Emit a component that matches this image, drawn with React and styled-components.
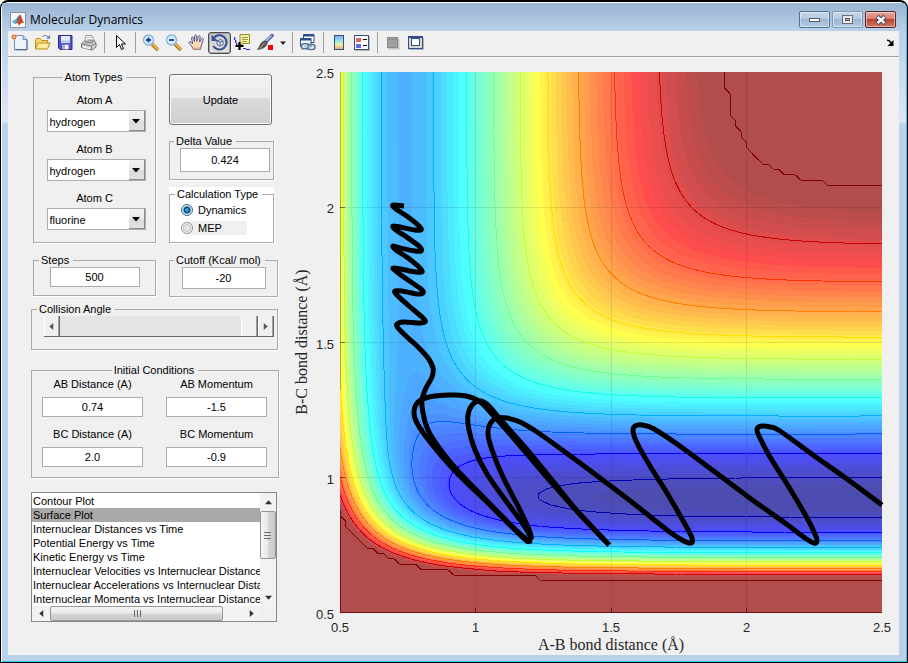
import React, { useState } from "react";
import styled, { createGlobalStyle, css } from "styled-components";

const GlobalStyle = createGlobalStyle`
  * { box-sizing: border-box; }
  body {
    margin: 0;
    background: #fff;
    color: #000;
    font: 11px/14px "Liberation Sans", Arial, sans-serif;
  }
  button, input, select { font: inherit; color: inherit; margin: 0; }
`;

/* ---------- window frame ---------- */

const Window = styled.main`
  min-height: 100vh;
  display: flex;
  flex-direction: column;
  padding: 0 8px 7px 7px;
  background: linear-gradient(#99b4d1 0, #b9d1ea 31px, #dce7f5 120px, #b9d1ea 122px);
  border: 1px solid #000;
  border-top-width: 2px;
  border-radius: 8px 8px 0 0;
  box-shadow: inset 1px 1px 0 #fff, inset -1px -1px 0 #35c4dc;
`;

const TitleBar = styled.header`
  display: flex;
  align-items: center;
  height: 28px;
  padding: 5px 4px 0 8px;
  background: linear-gradient(#99b4d1, #b9d1ea);
  margin: 1px -6px 0;
`;

const Title = styled.h1`
  flex: 1;
  margin: 0 0 0 4px;
  font: 12px/16px "Open Sans", "Noto Sans", sans-serif;
`;

const WindowButtons = styled.div`
  display: flex;
  gap: 2px;
  padding-right: 5px;
`;

const WindowButton = styled.button`
  display: grid;
  place-items: center;
  width: 31px;
  height: 17px;
  padding: 0;
  border: 1px solid ${(p) => (p.$close ? "#5a2630" : p.$soft ? "#8099b5" : "#56708f")};
  border-radius: 2px;
  background: ${(p) =>
    p.$close
      ? "linear-gradient(#e5a79d 0, #d98072 45%, #b8452f 50%, #cf7a63 100%)"
      : "linear-gradient(#c3d6ea 0, #b6cbe1 45%, #9ab6d2 50%, #b3cde6 100%)"};
  box-shadow: inset 0 0 0 1px rgba(255, 255, 255, 0.45);
`;

const Client = styled.div`
  flex: 1;
  display: flex;
  flex-direction: column;
  background: #f0f0f0;
`;

/* ---------- toolbar ---------- */

const Toolbar = styled.div`
  display: flex;
  align-items: center;
  height: 26px;
  padding-bottom: 2px;
  border-bottom: 1px solid #a0a0a0;
  box-shadow: 0 1px 0 #fff;
`;

const Tool = styled.button`
  display: grid;
  place-items: center;
  width: ${(p) => (p.$narrow ? 11 : 23)}px;
  height: 22px;
  padding: 0;
  border: 1px solid transparent;
  border-radius: 3px;
  background: none;
  ${(p) =>
    p.$pressed &&
    css`
      border-color: #4a4a4a;
      background: linear-gradient(#c8c8c8, #e4e4e4);
      box-shadow: inset 0 0 0 1px #aaa;
    `}
`;

const Divider = styled.span`
  width: 1px;
  height: 21px;
  margin: 0 3px 0 4px;
  background: #a0a0a0;
`;

const DockButton = styled(Tool)`
  margin-left: auto;
  width: 18px;
`;

/* ---------- control column ---------- */

const Pane = styled.div`
  flex: 1;
  display: flex;
  align-items: flex-start;
  padding-top: 1px;
`;

const Controls = styled.form`
  flex: 0 0 273px;
  display: flex;
  flex-direction: column;
  padding: 12px 0 33px 23px;
`;

const Row = styled.div`
  display: flex;
  align-items: flex-start;
  gap: 13px;
  padding-left: 2px;
  margin-bottom: ${(p) => p.$after || 0}px;
`;

const Stack = styled.div`
  display: flex;
  flex-direction: column;
`;

const WhitePanel = styled.div`
  background: #fff;
`;

const Group = styled.fieldset`
  display: block;
  min-width: 0;
  width: ${(p) => p.$w}px;
  height: ${(p) => p.$h}px;
  margin: 0 0 ${(p) => p.$after || 0}px;
  padding: ${(p) => p.$pad || "0 10px"};
  border: 1px solid #a9a9a9;
  box-shadow: 1px 1px 0 #fff;
`;

const Legend = styled.legend`
  padding: 0 4px 0 2px;
  white-space: nowrap;
  margin-left: ${(p) => (p.$center ? "auto" : `${p.$shift}px`)};
  margin-right: ${(p) => (p.$center ? "auto" : "0")};
`;

const AtomField = styled.label`
  display: flex;
  flex-direction: column;
  align-items: center;
  gap: 3px;
  margin-bottom: 10px;
`;

const Combo = styled.span`
  display: grid;
  width: 99px;
  height: 22px;
  margin-left: 3px;
  border: 1px solid #abadb3;
  background: #fff;
`;

const ComboSelect = styled.select`
  grid-area: 1 / 1;
  appearance: none;
  border: 0;
  border-radius: 0;
  padding: 2px 18px 0 2px;
  background: transparent;
`;

const ComboArrow = styled.span`
  grid-area: 1 / 1;
  justify-self: end;
  display: grid;
  place-items: center;
  width: 16px;
  border-right: 1px solid #8a8a8a;
  border-bottom: 1px solid #8a8a8a;
  background: linear-gradient(#f2f2f2, #ebebeb 50%, #dadada 51%, #e2e2e2);
  pointer-events: none;
`;

const UpdateButton = styled.button`
  width: 103px;
  height: 51px;
  margin: 4px 0 9px;
  border: 1px solid #707070;
  border-radius: 3px;
  background: linear-gradient(#f2f2f2 0, #ebebeb 46%, #dadada 48%, #cfcfcf 100%);
  box-shadow: inset 0 0 0 1px #fafafa;
`;

const TextBox = styled.input`
  display: block;
  width: ${(p) => p.$w}px;
  height: ${(p) => p.$h || 20}px;
  margin: 0 auto;
  padding: 0;
  border: 1px solid #abadb3;
  border-radius: 0;
  background: #fff;
  text-align: center;
`;

const RadioRow = styled.label`
  display: flex;
  align-items: center;
  gap: 5px;
  width: 66px;
  height: 14px;
  margin-bottom: 4px;
  background: ${(p) => (p.$shaded ? "linear-gradient(90deg, #fff 8px, #f0f0f0 8px)" : "none")};
`;

const Radio = styled.input`
  appearance: none;
  flex: none;
  width: 12px;
  height: 12px;
  border: 1px solid #8a8f94;
  border-radius: 50%;
  background: radial-gradient(circle, #e9e9e9 30%, #c4c8cc 50%, #f7f7f7 62%);
  &:checked {
    border-color: #3c6d8c;
    background: radial-gradient(circle, #5fd0f5 0, #1573ad 2px, #0f3f6b 3px, #bfe2f2 4px, #e8f6fc 6px);
  }
`;

const SliderRow = styled.div`
  display: flex;
  width: 230px;
  height: 21px;
  border-bottom: 1px solid #696969;
`;

const SliderButton = styled.button`
  display: grid;
  place-items: center;
  width: 16px;
  padding: 0;
  border: solid #696969;
  border-width: 0 1px 0 0;
  background: #f0f0f0;
  box-shadow: inset -1px 0 0 #a0a0a0, inset 1px 0 0 #fff;
`;

const Slider = styled.input`
  appearance: none;
  flex: 1;
  min-width: 0;
  height: 20px;
  background: #e5e5e5;
  &::-webkit-slider-thumb {
    appearance: none;
    width: 17px;
    height: 20px;
    background: #f0f0f0;
    border-right: 1px solid #696969;
    box-shadow: inset -1px 0 0 #a0a0a0, inset 1px 0 0 #fff;
  }
`;

const ConditionGrid = styled.div`
  display: grid;
  grid-template-columns: 101px 101px;
  column-gap: 23px;
  row-gap: 10px;
`;

const Condition = styled.label`
  display: flex;
  flex-direction: column;
  gap: 6px;
  text-align: center;
`;

/* ---------- plot list ---------- */

const ListFrame = styled.div`
  display: grid;
  grid-template: 113px 15px / 1fr 16px;
  width: 246px;
  height: 130px;
  border: 1px solid #828790;
  background: #f0f0f0;
`;

const PlotList = styled.select`
  width: 100%;
  height: 113px;
  padding: 1px 0 0;
  border: 0;
  border-radius: 0;
  background: #fff;
  overflow: hidden;
  scrollbar-width: none;
  outline: none;
`;

const PlotOption = styled.option`
  min-height: 0;
  height: 14px;
  padding: 1px 1px 0;
  line-height: 14px;
  &:checked {
    background: #a9a9a9 linear-gradient(#a9a9a9, #a9a9a9);
    color: #000;
  }
`;

const ScrollBar = styled.div`
  display: flex;
  flex-direction: ${(p) => (p.$vertical ? "column" : "row")};
  background: #f2f2f2;
`;

const ScrollButton = styled.button`
  display: grid;
  place-items: center;
  flex: 0 0 18px;
  padding: 0;
  border: 0;
  background: none;
`;

const ScrollThumb = styled.div`
  display: grid;
  place-items: center;
  flex: 0 0 ${(p) => p.$size}px;
  border: 1px solid #979797;
  border-radius: 2px;
  background: linear-gradient(
    ${(p) => (p.$vertical ? "90deg" : "180deg")},
    #f5f5f5,
    #e9e9eb 48%,
    #d6d6d9 52%,
    #c9c9cc
  );
`;

const Spring = styled.span`
  flex: 1;
`;

const PlotArea = styled.svg`
  flex: 1;
  min-width: 0;
  height: auto;
`;

/* ---------- icons ---------- */

const Icon = ({ children, size = 17 }) => (
  <svg width={size} height={size} viewBox={`0 0 ${size} ${size}`} fill="none" aria-hidden="true">
    {children}
  </svg>
);

const AppIcon = () => (
  <Icon size={16}>
    <rect x=".5" y=".5" width="15" height="15" fill="#f6f7f9" stroke="#8a929c" />
    <path d="M2 9.5 6 7.5 8.5 4 10 2.5V12L7.5 10.5 5.5 12Z" fill="#3b77b4" />
    <path d="M2 9.5 6 7.5 7 8.7 5.5 12Z" fill="#5fb0d0" />
    <path d="M10 2.5C11.5 4 12.6 8.5 14.3 11.5 12.4 10 11 10.8 9 13.8 8.6 12 7.5 11 6.5 11 8.5 9 9 5 10 2.5Z" fill="#d9501e" />
    <path d="M10 2.5C10.6 6 10 10.5 9 13.8 11 10.8 10.9 6 10 2.5Z" fill="#8e2412" />
  </Icon>
);

const NewIcon = () => (
  <Icon>
    <path d="M3.5 1.500h8.500l4 4v10.500H3.500z" fill="#edf4fc" stroke="#7390b8" />
    <path d="M12 1.500v4h4" fill="#bcd4ec" stroke="#7390b8" />
    <path d="M4.500 15.500h11.500V6" stroke="#4f6d9c" />
    <circle cx="3" cy="3" r="2.500" fill="#fff" />
    <path d="M3 0v1.500M3 4.500V6M0 3h1.500M4.500 3H6M1 1l1 1M4 4l1 1M5 1 4 2M2 4 1 5" stroke="#e0693a" />
    <circle cx="3" cy="3" r="1.500" fill="#ffe3b8" stroke="#e0693a" />
  </Icon>
);

const OpenIcon = () => (
  <Icon>
    <path d="M1.5 14.5v-9l1-1h3.500l1.500 2h6v3" fill="#f5d76a" stroke="#b98e1c" />
    <path d="M1.5 15 4 9h12l-2.500 6z" fill="#ffe88c" stroke="#b98e1c" />
    <path d="M4.8 10.500h9M4 12.500h9" stroke="#fff6c4" />
    <path d="M8.5 3C10 1 12.500 1 14 3" stroke="#5a7a9c" />
    <path d="M12 4.500h4V1z" fill="#5a7a9c" />
  </Icon>
);

const SaveIcon = () => (
  <Icon>
    <path d="M1.5 1.5H15v14H3L1.5 14z" fill="#5252d0" stroke="#2b2b8a" />
    <rect x="4" y="2" width="9" height="7" fill="#dfe9fb" />
    <path d="M4 7.5h9" stroke="#b5c8ee" strokeWidth="2" />
    <rect x="5" y="10.5" width="7" height="5" fill="#a9a9c4" />
    <rect x="8" y="11" width="3" height="4" fill="#f4f4fa" />
  </Icon>
);

const PrintIcon = () => (
  <Icon>
    <path d="M4.500 8 6 1.500h6l2.500 5z" fill="#fdfdfd" stroke="#8f98a0" />
    <path d="M7 3.500h5M7 5.500h6" stroke="#b9c2c8" />
    <path d="M1.500 9.500 5 7h9.500l1.500 2v4l-4 3-10.500-2.500z" fill="#d2d2d2" stroke="#7a7a7a" />
    <path d="M2 10l9.500 2L16 9M11.500 12v4" stroke="#7a7a7a" />
    <path d="M3 13l7 1.500" stroke="#f4f4f4" strokeWidth="1.500" />
    <path d="M5 8.500h8" stroke="#9a9a9a" strokeWidth="2" />
  </Icon>
);

const PointerIcon = () => (
  <Icon>
    <path d="M5.5 1.5v12l3-3 2 5 2-1-2-4.500h4z" fill="#fff" stroke="#000" />
  </Icon>
);

const LensIcon = ({ plus }) => (
  <Icon>
    <path d="M10 10l6 6" stroke="#a86a1a" strokeWidth="3.5" />
    <path d="M10 9.500l6 6" stroke="#f5b64a" strokeWidth="1.800" />
    <circle cx="6.500" cy="6" r="5" fill="#d3eefc" stroke="#86b4de" strokeWidth="1.400" />
    <path d={plus ? "M4 6h5M6.500 3.500v5" : "M4 6h5"} stroke="#1d3a96" strokeWidth="1.800" />
  </Icon>
);

const HandIcon = () => (
  <Icon>
    <path
      d="M5.5 15.500C4.500 12.500 1 9.500 .8 8.300 1.300 7 3.300 8 4.700 9.800L3.500 4C3.800 2.600 5.200 2.800 5.500 4l1 3.500L6.600 2C7 .7 8.300 .7 8.600 2l.3 5.300L10.300 2.200c.7-1.200 1.900-.7 1.900 .5L11.500 8l2.300-3.500c1-.8 1.900 0 1.500 1.100L13.500 11l-1 4.500z"
      fill="#fbd9b5"
      stroke="#4b5a96"
    />
    <path d="M5.5 14.500h7" stroke="#e8ae7a" strokeWidth="2" />
  </Icon>
);

const RotateIcon = () => (
  <Icon size={19}>
    <path d="M4 4.500A7.200 7.200 0 1 1 3.200 13" stroke="#3c5590" strokeWidth="2.200" />
    <path d="M1.500 1.500V8H8z" fill="#3c5590" />
    <path d="M7 8l3.500-1.500L13 8v3.500L9.800 13 7 11.500zM7 8l3 1.200L13 8M10 9.200V13" fill="#e8f0fa" stroke="#4a6498" />
  </Icon>
);

const CursorIcon = () => (
  <Icon>
    <path d="M.7 3v3M1.700 6v3M2.700 9v2M9 14.500h3M12 15.500h4" stroke="#2020d8" strokeWidth="1.200" />
    <path d="M6 .5h9.500v9H9l-3 2z" fill="#f6f2a4" stroke="#8f8a2e" />
    <path d="M8 3.500h6M8 5.500h6M8 7.500h5" stroke="#a39d4a" />
    <path d="M1.500 12h8M5.500 8v8" stroke="#000" strokeWidth="2.200" />
  </Icon>
);

const BrushIcon = () => (
  <Icon>
    <path d="M15 1.500 8 8.500" stroke="#4a5fa8" strokeWidth="3.400" strokeLinecap="round" />
    <path d="M14.500 1.500 8 8" stroke="#c4d4f2" strokeWidth="1.200" />
    <path d="M8.500 7c1.500 .5 2 1.500 1.500 3-1.500 3.500-5 5-9.500 5.500C3 13 3 9 6 7.500z" fill="#5a5a52" stroke="#333" strokeWidth=".6" />
    <path d="M3 14.500c2-2 2.500-4 4.500-5.500" stroke="#a5a596" />
    <rect x="11" y="11" width="5" height="5" fill="#f00" />
  </Icon>
);

const LinkIcon = () => (
  <Icon>
    <path d="M4.500 .5H15v8H4.500z" fill="#fff" stroke="#2f4f86" />
    <path d="M4.500 1.500H15" stroke="#2f4f86" strokeWidth="2" />
    <path d="M1.500 4.500H12v8H1.500z" fill="#f0f5fb" stroke="#2f4f86" />
    <path d="M1.500 5.500H12" stroke="#2f4f86" strokeWidth="2" />
    <rect x="2.500" y="9.800" width="7.500" height="5" rx="2.400" fill="#e8f0f8" stroke="#56789c" strokeWidth="1.600" />
    <rect x="8.500" y="10.500" width="7.500" height="5" rx="2.400" stroke="#56789c" strokeWidth="1.600" />
    <path d="M5 12.600h8.500" stroke="#9db9d2" strokeWidth="1.400" />
  </Icon>
);

const ColorbarIcon = () => (
  <Icon>
    <defs>
      <linearGradient id="bar" x2="0" y2="1">
        <stop offset="0" stopColor="#8c9ef5" />
        <stop offset=".35" stopColor="#8fe3ee" />
        <stop offset=".65" stopColor="#f3ee9a" />
        <stop offset="1" stopColor="#f0a08c" />
      </linearGradient>
    </defs>
    <rect x="4.500" y="1.500" width="9" height="14" fill="url(#bar)" stroke="#2f4f86" />
  </Icon>
);

const LegendIcon = () => (
  <Icon>
    <path d="M2 16.500h14.500V3" stroke="#b9b9b0" />
    <rect x="1.500" y="1.500" width="14" height="14" fill="#fff" stroke="#2f4f86" />
    <rect x="3" y="4" width="5" height="4" fill="#e46464" />
    <rect x="3" y="10" width="5" height="4" fill="#6464e4" />
    <path d="M10 5.500h4M10 11.500h4" stroke="#000" />
  </Icon>
);

const HideIcon = () => (
  <Icon>
    <path d="M4 14.500h10.500V5" stroke="#c4c4c4" strokeWidth="2" />
    <rect x="3.500" y="3.500" width="10" height="10" fill="#a0a0a0" stroke="#8a8a8a" />
    <path d="M4 5.500h9" stroke="#8c8c8c" />
  </Icon>
);

const ShowIcon = () => (
  <Icon>
    <path d="M2 15.500h14.500V4" stroke="#b4b4b4" />
    <rect x="1.500" y="2.500" width="14" height="12" fill="#d6d9cc" stroke="#2f4f86" />
    <path d="M1.500 3h14" stroke="#2f4f86" strokeWidth="2" />
    <rect x="4.500" y="4.500" width="8" height="7" fill="#fff" stroke="#2f4f86" />
  </Icon>
);

const Triangle = ({ dir = "down", color = "#000", w = 7 }) => {
  const turn = { down: 0, left: 90, up: 180, right: 270 }[dir];
  return (
    <svg width={w} height={w} viewBox="0 0 8 8" aria-hidden="true">
      <path d="M0 2h8L4 6.500z" fill={color} transform={`rotate(${turn} 4 4)`} />
    </svg>
  );
};

const Grip = ({ vertical }) => (
  <svg width="8" height="8" viewBox="0 0 8 8" aria-hidden="true">
    <path
      d={vertical ? "M0 1.500h7M0 4.500h7M0 7.500h7" : "M1.500 0v7M4.500 0v7M7.500 0v7"}
      stroke="#6b6b6b"
      shapeRendering="crispEdges"
    />
  </svg>
);

/* ---------- potential energy surface (collinear LEPS form) ---------- */

const R_MIN = 0.5;
const R_MAX = 2.5;
const CUTOFF = -20;
const CONTOUR_STEP = 10.2;
const CELLS = 100;
const FRAME = { left: 340, top: 72, width: 542, height: 541 };

const px = (r) => FRAME.left + ((r - R_MIN) / (R_MAX - R_MIN)) * FRAME.width;
const py = (r) => FRAME.top + ((R_MAX - r) / (R_MAX - R_MIN)) * FRAME.height;

const PAIR_AB = { d: 105.568, b: 1.9965, r0: 0.7391, s: 0.1695 };
const PAIR_BC = { d: 136.093, b: 2.2735, r0: 0.921, s: 0.1746 };
const PAIR_AC = { d: 148.579, b: 2.389, r0: 0.9577, s: 0.2527 };

function pairTerms({ d, b, r0, s }, r) {
  const e = Math.exp(-b * (r - r0));
  const singlet = d * (e * e - 2 * e);
  const triplet = (d / 2) * ((1 - s) / (1 + s)) * (e * e + 2 * e);
  return [(singlet + triplet) / 2, (singlet - triplet) / 2];
}

function energy(ab, bc) {
  const [q1, j1] = pairTerms(PAIR_AB, ab);
  const [q2, j2] = pairTerms(PAIR_BC, bc);
  const [q3, j3] = pairTerms(PAIR_AC, ab + bc);
  const exchange = Math.sqrt(((j1 - j2) ** 2 + (j2 - j3) ** 2 + (j3 - j1) ** 2) / 2);
  return q1 + q2 + q3 - exchange;
}

const AXIS = Array.from({ length: CELLS + 1 }, (_, i) => R_MIN + (i * (R_MAX - R_MIN)) / CELLS);
const FIELD = AXIS.map((bc) => AXIS.map((ab) => Math.min(energy(ab, bc), CUTOFF)));
const V_MIN = Math.min(...FIELD.flat());

function jet(i, n = 64) {
  const q = n / 4;
  const ramp = (c) => Math.max(0, Math.min(1, 1.5 - Math.abs(i + 1 - c) / q));
  return [ramp(3 * q), ramp(2 * q), ramp(q)];
}

const shade = (i, alpha) =>
  `rgb(${jet(i)
    .map((c) => Math.round(255 * (c * alpha + 1 - alpha)))
    .join(",")})`;

/* Clips every grid cell at one level: the area above it and the line along it. */
function trace(level) {
  let area = "";
  let line = "";
  for (let j = 0; j < CELLS; j++) {
    let runStart = -1;
    for (let i = 0; i <= CELLS; i++) {
      const corners =
        i < CELLS
          ? [
              [i, j],
              [i + 1, j],
              [i + 1, j + 1],
              [i, j + 1],
            ]
          : [];
      const above = corners.filter(([a, b]) => FIELD[b][a] >= level).length;
      if (above === 4) {
        if (runStart < 0) runStart = i;
        continue;
      }
      if (runStart >= 0) {
        const x0 = px(AXIS[runStart]);
        const x1 = px(AXIS[i]);
        area += `M${x0} ${py(AXIS[j])}H${x1}V${py(AXIS[j + 1])}H${x0}Z`;
        runStart = -1;
      }
      if (!above) continue;
      const shape = [];
      const cuts = [];
      corners.forEach(([a, b], k) => {
        const [c, d] = corners[(k + 1) % 4];
        const v0 = FIELD[b][a];
        const v1 = FIELD[d][c];
        const x0 = px(AXIS[a]);
        const y0 = py(AXIS[b]);
        if (v0 >= level) shape.push(`${x0.toFixed(1)} ${y0.toFixed(1)}`);
        if (v0 >= level !== v1 >= level) {
          const t = (level - v0) / (v1 - v0);
          const x = x0 + t * (px(AXIS[c]) - x0);
          const y = y0 + t * (py(AXIS[d]) - y0);
          const point = `${x.toFixed(1)} ${y.toFixed(1)}`;
          shape.push(point);
          cuts.push(point);
        }
      });
      area += `M${shape.join("L")}Z`;
      for (let k = 0; k + 1 < cuts.length; k += 2) line += `M${cuts[k]}L${cuts[k + 1]}`;
    }
  }
  return { area, line };
}

const BANDS = Array.from({ length: 63 }, (_, k) => {
  const level = V_MIN + ((k + 1) / 64) * (CUTOFF - V_MIN);
  return { level, fill: shade(Math.min(k + 1, 62), 0.7), d: trace(level).area };
});

const CONTOURS = Array.from({ length: 12 }, (_, k) => {
  const level = CUTOFF - CONTOUR_STEP * k - 0.0001;
  const index = Math.min(63, Math.floor(((level - V_MIN) / (CUTOFF - V_MIN)) * 64));
  return { level, stroke: shade(index, 1), d: trace(level).line };
});

/* ---------- trajectory, as points along each pass ---------- */

const PASSES = [
  [
    [404, 206], [393, 205], [396, 209], [408, 217], [419, 226], [421, 230], [415, 230], [400, 227], [393, 226],
    [396, 230], [408, 238], [420, 247], [421, 251], [415, 251], [400, 248], [393, 246], [396, 250], [408, 258],
    [420, 268], [422, 272], [416, 272], [401, 269], [393, 268], [397, 272], [408, 280], [421, 289], [423, 293],
    [417, 294], [402, 291], [395, 291], [397, 295], [409, 306], [423, 318], [425, 322], [418, 323], [404, 322],
    [397, 324], [398, 328], [407, 337], [418, 347], [428, 358], [433, 368], [432, 377], [426, 388], [422, 400],
    [423, 413], [428, 430], [440, 449], [457, 470], [490, 504], [516, 530], [528, 540], [532, 540],
  ],
  [
    [532, 540], [527, 541], [514, 529], [488, 503], [455, 471], [430, 442], [417, 423], [414, 412], [418, 402],
    [429, 397], [449, 395], [466, 396], [479, 401], [491, 413], [510, 434], [545, 475], [577, 511], [609, 545],
  ],
  [
    [532, 539], [523, 524], [506, 501], [487, 474], [475, 450], [469, 430], [468, 415], [473, 404], [481, 401],
    [489, 406], [500, 419], [530, 453], [560, 490], [577, 511], [609, 545],
  ],
  [
    [531, 540], [530, 532], [520, 510], [503, 477], [492, 450], [488, 434], [490, 424], [497, 418], [507, 418],
    [520, 422], [537, 432], [565, 452], [600, 478], [633, 503], [667, 530], [682, 540], [691, 543], [692, 538],
    [686, 526], [667, 493], [650, 466], [637, 443], [633, 431], [635, 426], [642, 425], [654, 429], [684, 449],
    [747, 496], [785, 523], [805, 538], [814, 543], [817, 541], [815, 534], [806, 516], [787, 484], [770, 457],
    [759, 436], [757, 429], [762, 426], [770, 427], [780, 431], [813, 455], [847, 479], [882, 505],
  ],
];

/* Catmull-Rom spline written as cubic segments. */
function spline(points) {
  const at = (i) => points[Math.max(0, Math.min(points.length - 1, i))];
  return points.slice(1).reduce((d, end, i) => {
    const [p0, p1, p3] = [at(i - 1), at(i), at(i + 2)];
    const c1 = p1.map((v, k) => v + (end[k] - p0[k]) / 6);
    const c2 = end.map((v, k) => v - (p3[k] - p1[k]) / 6);
    return `${d}C${[...c1, ...c2, ...end].map((v) => v.toFixed(1)).join(" ")}`;
  }, `M${points[0].join(" ")}`);
}

const TICKS = [0.5, 1, 1.5, 2, 2.5];
const right = FRAME.left + FRAME.width;
const bottom = FRAME.top + FRAME.height;

const EnergyPlot = () => (
  <PlotArea viewBox="281 58 618 597" role="img" aria-label="Surface plot of the potential energy with the trajectory">
    <g shapeRendering="crispEdges">
      <rect x={FRAME.left} y={FRAME.top} width={FRAME.width} height={FRAME.height} fill={shade(0, 0.7)} />
      {BANDS.map((b) => (
        <path key={b.level} d={b.d} fill={b.fill} />
      ))}
      <g stroke="#000" strokeOpacity=".1">
        {TICKS.slice(1, 4).map((t) => (
          <path key={t} d={`M${px(t)} ${FRAME.top}V${bottom}M${FRAME.left} ${py(t)}H${right}`} />
        ))}
      </g>
      {CONTOURS.map((c) => (
        <path key={c.level} d={c.d} stroke={c.stroke} fill="none" />
      ))}
      <path d={`M${FRAME.left + 0.5} 514V${bottom - 0.5}H${right}`} stroke="#7a1010" fill="none" />
      <path d={`M${FRAME.left + 0.5} ${FRAME.top}V390`} stroke="#b4b400" fill="none" />
      {TICKS.slice(1, 4).map((t) => (
        <path key={t} d={`M${px(t)} ${bottom}v-5M${FRAME.left} ${py(t)}h5`} stroke="#000" strokeOpacity=".5" />
      ))}
    </g>
    <g fill="none" stroke="#000" strokeWidth="5" strokeLinejoin="round">
      {PASSES.map((p, i) => (
        <path key={i} d={spline(p)} />
      ))}
    </g>
    <g fontFamily='"Liberation Sans", Arial, sans-serif' fontSize="13" fill="#262626">
      {TICKS.map((t) => (
        <text key={`x${t}`} x={px(t)} y="632" textAnchor="middle">
          {t}
        </text>
      ))}
      {TICKS.map((t) => (
        <text key={`y${t}`} x="334" y={py(t) + 6} textAnchor="end">
          {t}
        </text>
      ))}
    </g>
    <g fontFamily='"Liberation Serif", "Times New Roman", serif' fontSize="16" fill="#262626" textAnchor="middle">
      <text x="611" y="650">A-B bond distance (Å)</text>
      <text transform="translate(307 342) rotate(-90)">B-C bond distance (Å)</text>
    </g>
  </PlotArea>
);

/* ---------- form parts ---------- */

const ATOMS = ["hydrogen", "fluorine", "chlorine", "oxygen"];

const AtomSelect = ({ label, value }) => (
  <AtomField>
    {label}
    <Combo>
      <ComboSelect defaultValue={value}>
        {ATOMS.map((a) => (
          <option key={a}>{a}</option>
        ))}
      </ComboSelect>
      <ComboArrow>
        <Triangle w={8} />
      </ComboArrow>
    </Combo>
  </AtomField>
);

const CONDITIONS = [
  ["AB Distance (A)", "0.74"],
  ["AB Momentum", "-1.5"],
  ["BC Distance (A)", "2.0"],
  ["BC Momentum", "-0.9"],
];

const PLOTS = [
  "Contour Plot",
  "Surface Plot",
  "Internuclear Distances vs Time",
  "Potential Energy vs Time",
  "Kinetic Energy vs Time",
  "Internuclear Velocities vs Internuclear Distance",
  "Internuclear Accelerations vs Internuclear Distance",
  "Internuclear Momenta vs Internuclear Distance",
];

const TOOLS = [
  ["New Figure", NewIcon],
  ["Open File", OpenIcon],
  ["Save Figure", SaveIcon],
  ["Print Figure", PrintIcon],
  null,
  ["Edit Plot", PointerIcon],
  null,
  ["Zoom In", () => <LensIcon plus />],
  ["Zoom Out", LensIcon],
  ["Pan", HandIcon],
  ["Rotate 3D", RotateIcon],
  ["Data Cursor", CursorIcon],
  ["Brush", BrushIcon],
  ["Brush Options", () => <Triangle w={6} color="#222" />],
  null,
  ["Link Plot", LinkIcon],
  null,
  ["Insert Colorbar", ColorbarIcon],
  ["Insert Legend", LegendIcon],
  null,
  ["Hide Plot Tools", HideIcon],
  ["Show Plot Tools", ShowIcon],
];

export default function App() {
  const [mode, setMode] = useState("Dynamics");
  const [angle, setAngle] = useState(180);
  const turnBy = (step) => setAngle((a) => Math.max(0, Math.min(180, a + step)));

  return (
    <>
      <GlobalStyle />
      <Window>
        <TitleBar>
          <AppIcon />
          <Title>Molecular Dynamics</Title>
          <WindowButtons>
            <WindowButton aria-label="Minimize">
              <svg width="13" height="7" viewBox="0 0 13 7">
                <rect x="1.5" y="2.5" width="10" height="3" fill="#fff" stroke="#535666" />
              </svg>
            </WindowButton>
            <WindowButton aria-label="Maximize" $soft>
              <svg width="11" height="9" viewBox="0 0 11 9">
                <rect x=".5" y=".5" width="10" height="8" fill="#e8e8ea" stroke="#6a6d7a" />
                <rect x="3.5" y="3.5" width="4" height="2" fill="#a9bdd4" stroke="#535666" />
              </svg>
            </WindowButton>
            <WindowButton aria-label="Close" $close>
              <svg width="12" height="10" viewBox="0 0 12 10">
                <path d="M2 1.5 10 8.5M10 1.5 2 8.5" stroke="#4b4658" strokeWidth="4.5" />
                <path d="M2.5 2 9.5 8M9.5 2 2.5 8" stroke="#f6f6f6" strokeWidth="2.5" />
              </svg>
            </WindowButton>
          </WindowButtons>
        </TitleBar>

        <Client>
          <Toolbar role="toolbar" aria-label="Figure">
            {TOOLS.map((tool, i) => {
              if (!tool) return <Divider key={i} />;
              const [name, Glyph] = tool;
              return (
                <Tool key={name} aria-label={name} $pressed={name === "Rotate 3D"} $narrow={name === "Brush Options"}>
                  <Glyph />
                </Tool>
              );
            })}
            <DockButton aria-label="Dock Figure">
              <svg width="9" height="8" viewBox="0 0 9 8">
                <path d="M1 1.5C3 .5 4 2 5.5 4.5" stroke="#000" strokeWidth="1.6" fill="none" />
                <path d="M7.5 1v6h-6z" fill="#000" />
              </svg>
            </DockButton>
          </Toolbar>

          <Pane>
            <Controls onSubmit={(e) => e.preventDefault()}>
              <Row $after={10}>
                <Group $w={123} $h={173} $pad="9px 0 0">
                  <Legend $center>Atom Types</Legend>
                  <AtomSelect label="Atom A" value="hydrogen" />
                  <AtomSelect label="Atom B" value="hydrogen" />
                  <AtomSelect label="Atom C" value="fluorine" />
                </Group>
                <Stack>
                  <UpdateButton type="submit">Update</UpdateButton>
                  <Group $w={105} $h={46} $after={7}>
                    <Legend $shift={-6}>
                      <label htmlFor="delta">Delta Value</label>
                    </Legend>
                    <TextBox id="delta" $w={90} $h={24} defaultValue="0.424" />
                  </Group>
                  <WhitePanel>
                    <Group $w={105} $h={56} $pad="2px 11px">
                      <Legend $shift={-6}>Calculation Type</Legend>
                      {["Dynamics", "MEP"].map((name) => (
                        <RadioRow key={name} $shaded={name === "MEP"}>
                          <Radio type="radio" name="mode" checked={mode === name} onChange={() => setMode(name)} />
                          {name}
                        </RadioRow>
                      ))}
                    </Group>
                  </WhitePanel>
                </Stack>
              </Row>

              <Row $after={5}>
                <Group $w={123} $h={43}>
                  <Legend $shift={-5}>
                    <label htmlFor="steps">Steps</label>
                  </Legend>
                  <TextBox id="steps" $w={90} defaultValue="500" />
                </Group>
                <Group $w={109} $h={44}>
                  <Legend $shift={-6}>
                    <label htmlFor="cutoff">Cutoff (Kcal/ mol)</label>
                  </Legend>
                  <TextBox id="cutoff" $w={84} $h={22} defaultValue="-20" />
                </Group>
              </Row>

              <Group $w={247} $h={48} $after={13} $pad="0 12px">
                <Legend $shift={-7}>
                  <label htmlFor="angle">Collision Angle</label>
                </Legend>
                <SliderRow>
                  <SliderButton type="button" aria-label="Decrease angle" onClick={() => turnBy(-1)}>
                    <Triangle dir="left" color="#555" />
                  </SliderButton>
                  <Slider
                    id="angle"
                    type="range"
                    min="0"
                    max="180"
                    value={angle}
                    onChange={(e) => setAngle(Number(e.target.value))}
                  />
                  <SliderButton type="button" aria-label="Increase angle" onClick={() => turnBy(1)}>
                    <Triangle dir="right" color="#555" />
                  </SliderButton>
                </SliderRow>
              </Group>

              <Group $w={248} $h={115} $after={14}>
                <Legend $center>Initial Conditions</Legend>
                <ConditionGrid>
                  {CONDITIONS.map(([name, value]) => (
                    <Condition key={name}>
                      {name}
                      <TextBox $w={101} defaultValue={value} />
                    </Condition>
                  ))}
                </ConditionGrid>
              </Group>

              <ListFrame>
                <PlotList size={8} defaultValue="Surface Plot" aria-label="Plot">
                  {PLOTS.map((name) => (
                    <PlotOption key={name}>{name}</PlotOption>
                  ))}
                </PlotList>
                <ScrollBar $vertical>
                  <ScrollButton type="button" aria-label="Scroll up">
                    <Triangle dir="up" color="#333" />
                  </ScrollButton>
                  <ScrollThumb $vertical $size={48}>
                    <Grip vertical />
                  </ScrollThumb>
                  <Spring />
                  <ScrollButton type="button" aria-label="Scroll down">
                    <Triangle color="#333" />
                  </ScrollButton>
                </ScrollBar>
                <ScrollBar>
                  <ScrollButton type="button" aria-label="Scroll left">
                    <Triangle dir="left" color="#333" />
                  </ScrollButton>
                  <ScrollThumb $size={173}>
                    <Grip />
                  </ScrollThumb>
                  <Spring />
                  <ScrollButton type="button" aria-label="Scroll right">
                    <Triangle dir="right" color="#333" />
                  </ScrollButton>
                </ScrollBar>
              </ListFrame>
            </Controls>
            <EnergyPlot />
          </Pane>
        </Client>
      </Window>
    </>
  );
}
